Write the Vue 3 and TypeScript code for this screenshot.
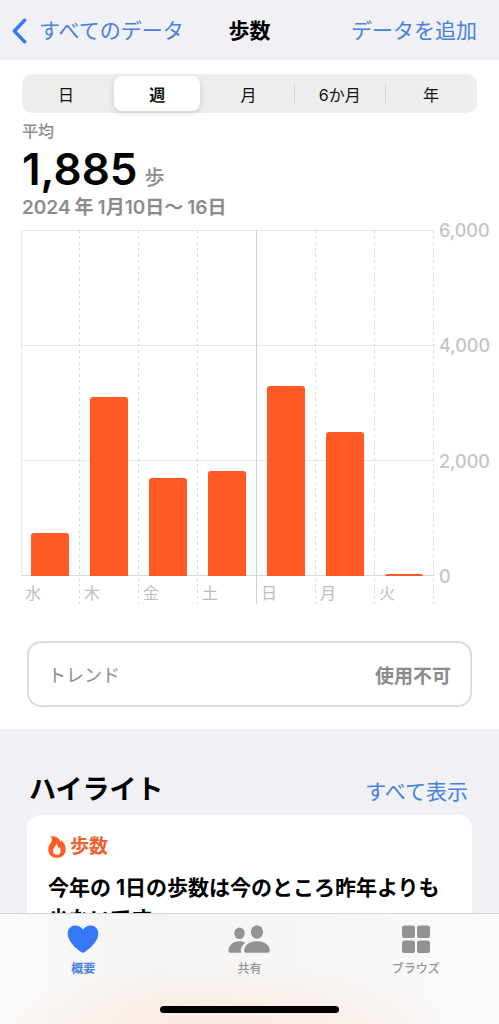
<script setup lang="ts">
import { ref } from 'vue'

interface DaySteps {
  label: string
  steps: number
}

const ranges = ['日', '週', '月', '6か月', '年']
const selectedRange = ref('週')

const maxSteps = 6000
const ticks = ['6,000', '4,000', '2,000', '0']

const days: DaySteps[] = [
  { label: '水', steps: 748 },
  { label: '木', steps: 3100 },
  { label: '金', steps: 1694 },
  { label: '土', steps: 1820 },
  { label: '日', steps: 3300 },
  { label: '月', steps: 2495 },
  { label: '火', steps: 38 },
]

const barHeight = (steps: number): string => `${(steps / maxSteps) * 100}%`
</script>

<template>
  <div class="screen">
    <div class="scroll">
      <header class="nav">
        <a href="#" class="back">
          <svg class="chevron" viewBox="0 0 15 26" aria-hidden="true">
            <path d="M12.700 2.200 2.400 13l10.300 10.800" />
          </svg>
          <span>すべてのデータ</span>
        </a>
        <h1>歩数</h1>
        <a href="#" class="add">データを追加</a>
      </header>

      <main>
        <section class="summary">
          <div class="segments" role="group" aria-label="期間">
            <button
              v-for="range in ranges"
              :key="range"
              type="button"
              :class="{ active: range === selectedRange }"
              :aria-pressed="range === selectedRange"
              @click="selectedRange = range"
            >
              {{ range }}
            </button>
          </div>

          <p class="caption">平均</p>
          <p class="average"><strong>1,885</strong><span>歩</span></p>
          <p class="period"><span>2024</span><span>年</span><span>1月10日〜</span><span>16日</span></p>

          <div class="chart">
            <div class="grid-lines"><i></i><i></i><i></i></div>
            <div class="columns">
              <div v-for="day in days" :key="day.label" class="column">
                <div class="bar-area">
                  <div class="bar" :style="{ height: barHeight(day.steps) }"></div>
                </div>
                <span class="day">{{ day.label }}</span>
              </div>
            </div>
            <div class="ticks">
              <span v-for="tick in ticks" :key="tick">{{ tick }}</span>
            </div>
          </div>

          <button type="button" class="trend">
            <span>トレンド</span>
            <strong>使用不可</strong>
          </button>
        </section>

        <section class="highlights">
          <div class="section-head">
            <h2>ハイライト</h2>
            <a href="#">すべて表示</a>
          </div>
          <article class="card">
            <h3>
              <svg class="flame" viewBox="0 0 18 22" aria-hidden="true">
                <path
                  fill-rule="evenodd"
                  d="M2.600.400C7.200-.200 11 1.700 12.300 5.300c.2.600.7.600.8 0l.1-1.100c2.800 2.100 4.500 5.300 4.500 9 0 5.100-3.700 8.600-8.800 8.600S.3 18.500.3 13.700c0-2.900 1-4.900 2.600-6.900C4.400 4.800 4.600 2.500 2.600.400ZM8 7.600c.5 2.700-3 4.200-3 7.500 0 2.300 1.600 3.900 3.800 3.900s3.800-1.600 3.800-4c0-1.500-.5-2.800-1.300-3.900-.1 1-.5 1.500-1 1.700.1-2-.6-3.900-2.300-5.200Z"
                />
              </svg>
              <span>歩数</span>
            </h3>
            <p>今年の 1日の歩数は今のところ昨年よりも少ないです。</p>
          </article>
        </section>
      </main>
    </div>

    <nav class="tabs" aria-label="メイン">
      <div class="tab-row">
        <a href="#" class="tab current" aria-current="page">
          <svg viewBox="0 0 44 30" aria-hidden="true">
            <path d="M22 29C20 28.200 6.700 19.400 6.700 9.500 6.700 4.600 10.100 1.500 14.300 1.500c3.500 0 6.100 1.700 7.700 4.300 1.600-2.600 4.200-4.300 7.700-4.300 4.200 0 7.600 3.100 7.600 8C37.300 19.400 24 28.200 22 29Z" />
          </svg>
          <span>概要</span>
        </a>
        <a href="#" class="tab">
          <svg viewBox="0 0 44 30" aria-hidden="true">
            <ellipse cx="12.500" cy="9.300" rx="5.200" ry="5.800" />
            <path d="M1.500 26.500c0-5.200 4.600-9.300 11-9.300 2.400 0 4.400.6 6 1.500-3 2-4.600 4.900-4.600 8 0 .9.200 1.500.5 2H3.200c-1.100 0-1.700-.8-1.700-2.200Z" />
            <ellipse cx="30" cy="8" rx="6.100" ry="6.700" />
            <path d="M17.200 26.500c0-5.100 5.200-9.300 12.800-9.300s12.800 4.200 12.800 9.300c0 1.400-.7 2.200-1.900 2.200H19.100c-1.200 0-1.900-.8-1.900-2.200Z" />
          </svg>
          <span>共有</span>
        </a>
        <a href="#" class="tab">
          <svg viewBox="0 0 44 30" aria-hidden="true">
            <rect x="8" y="1.500" width="13" height="12.500" rx="2.600" />
            <rect x="23" y="1.500" width="13" height="12.500" rx="2.600" />
            <rect x="8" y="16.500" width="13" height="12.500" rx="2.600" />
            <rect x="23" y="16.500" width="13" height="12.500" rx="2.600" />
          </svg>
          <span>ブラウズ</span>
        </a>
      </div>
      <div class="home-indicator"></div>
    </nav>
  </div>
</template>

<style>
body {
  margin: 0;
  background: #f0f0f5;
}
</style>

<style scoped>
* {
  box-sizing: border-box;
}

h1,
h2,
h3,
p {
  margin: 0;
}

a {
  color: #4781dc;
  text-decoration: none;
}

button {
  border: 0;
  padding: 0;
  background: none;
  font: inherit;
  color: inherit;
  cursor: pointer;
}

.screen {
  position: relative;
  height: 100vh;
  overflow: hidden;
  background: #f0f0f5;
  color: #000;
  font-family: Inter, 'Noto Sans CJK JP', sans-serif;
}

.scroll {
  height: 100%;
  overflow-y: auto;
  scrollbar-width: none;
}

.nav {
  display: grid;
  grid-template-columns: 1fr auto 1fr;
  align-items: center;
  height: 60px;
  padding: 2px 12px 0;
  font-size: 21px;
  line-height: 30px;
}

.nav h1 {
  font-size: 21px;
  line-height: 30px;
  font-weight: 700;
}

.back {
  display: flex;
  align-items: center;
  gap: 12px;
}

.chevron {
  width: 15px;
  height: 26px;
  fill: none;
  stroke: #3478f0;
  stroke-width: 3.4;
  stroke-linecap: round;
  stroke-linejoin: round;
}

.add {
  justify-self: end;
  margin-right: 10px;
}

.summary {
  padding: 14px 22px 22px;
  background: #fff;
}

.segments {
  display: grid;
  grid-template-columns: repeat(5, 1fr);
  gap: 5px;
  height: 39px;
  padding: 2px 3px 2px 1px;
  border-radius: 10px;
  background: #ededee;
}

.segments button {
  position: relative;
  border-radius: 8px;
  color: #111;
  font-size: 16px;
  font-weight: 400;
}

.segments button.active {
  background: #fff;
  font-weight: 600;
  box-shadow: 0 2px 6px rgb(0 0 0 / 14%);
}

.segments button:nth-child(n + 4)::before {
  content: '';
  position: absolute;
  top: 8px;
  bottom: 8px;
  left: -3px;
  width: 1px;
  background: #d0d0d2;
}

.caption {
  margin-top: 7px;
  color: #8b8b8b;
  font-size: 16px;
  line-height: 22px;
  font-weight: 500;
}

.average {
  display: flex;
  align-items: baseline;
  gap: 7px;
  height: 54px;
  line-height: 54px;
}

.average strong {
  font-size: 44px;
  font-weight: 600;
}

.average span {
  color: #8b8b8b;
  font-size: 20px;
  font-weight: 500;
}

.period {
  display: flex;
  gap: 4px;
  color: #8b8b8b;
  font-size: 19px;
  line-height: 24px;
  font-weight: 600;
}

.chart {
  display: grid;
  grid-template-columns: 1fr 55px;
  grid-template-rows: 346px 28px;
  margin: 10px -12px 0 -1px;
}

.grid-lines {
  grid-area: 1 / 1;
  display: grid;
  grid-template-rows: repeat(3, 1fr);
  border-bottom: 1px solid #d9d9d9;
  border-left: 1px solid #ebebeb;
}

.grid-lines i {
  border-top: 1px solid #e8e8e8;
}

.columns {
  grid-area: 1 / 1 / 3 / 2;
  display: grid;
  grid-template-columns: repeat(7, 1fr);
}

.column {
  display: grid;
  grid-template-rows: 346px 28px;
  background: repeating-linear-gradient(#dcdcdc 0 3px, transparent 3px 6px) right top / 1px 100% no-repeat;
}

.column:nth-child(4) {
  background: linear-gradient(#d2d2d2, #d2d2d2) right top / 1px 100% no-repeat;
}

.bar-area {
  display: flex;
  align-items: flex-end;
  padding: 0 11px 0 10px;
}

.bar {
  width: 100%;
  border-radius: 3px 3px 0 0;
  background: #ff5a24;
}

.day {
  padding-left: 4px;
  color: #bdbdbf;
  font-size: 16px;
  line-height: 34px;
}

.ticks {
  grid-area: 1 / 2;
  display: flex;
  flex-direction: column;
  justify-content: space-between;
  margin: -11px 0 -13px;
  padding-left: 5px;
  color: #c4c4c6;
  font-size: 18px;
  line-height: 24px;
  font-weight: 500;
}

.trend {
  display: flex;
  align-items: center;
  justify-content: space-between;
  width: calc(100% - 10px);
  height: 66px;
  margin: 37px 5px 0;
  padding: 0 19px;
  border: 2px solid #dcdcdc;
  border-radius: 14px;
  color: #8b8b8b;
  font-size: 18px;
}

.trend strong {
  font-size: 19px;
  font-weight: 700;
}

.highlights {
  padding: 43px 27px 110px;
}

.section-head {
  display: flex;
  align-items: baseline;
  justify-content: space-between;
  padding: 0 4px 0 2px;
}

.section-head h2 {
  font-size: 27px;
  line-height: 36px;
  font-weight: 700;
}

.section-head a {
  font-size: 21px;
}

.card {
  margin-top: 7px;
  padding: 18px 21px;
  border-radius: 14px;
  background: #fff;
}

.card h3 {
  display: flex;
  align-items: center;
  gap: 4px;
  color: #f2602f;
  font-size: 19px;
  line-height: 28px;
  font-weight: 700;
}

.flame {
  width: 18px;
  height: 22px;
  fill: #ff5a24;
}

.card p {
  margin-top: 11px;
  font-size: 21px;
  line-height: 31px;
  font-weight: 700;
}

.tabs {
  position: absolute;
  right: 0;
  bottom: 0;
  left: 0;
  height: 111px;
  border-top: 1px solid #d3d3d4;
  background:
    radial-gradient(ellipse 46% 60% at 45% 108%, #ffe7dc, rgb(255 231 220 / 0%)),
    linear-gradient(90deg, #fafafa, #f4f4f3 30%, #f7f7f7 75%, #fafafa);
}

.tab-row {
  display: grid;
  grid-template-columns: repeat(3, 1fr);
}

.tab {
  display: flex;
  flex-direction: column;
  align-items: center;
  padding-top: 10px;
  color: #949494;
  font-size: 12px;
  line-height: 18px;
  font-weight: 500;
}

.tab svg {
  width: 44px;
  height: 30px;
  margin-bottom: 6px;
  fill: #929292;
}

.tab.current {
  color: #4781dc;
  font-weight: 700;
}

.tab.current svg {
  fill: #3478f6;
}

.home-indicator {
  width: 36%;
  height: 7px;
  margin: 28px auto 0;
  border-radius: 4px;
  background: #000;
}
</style>
